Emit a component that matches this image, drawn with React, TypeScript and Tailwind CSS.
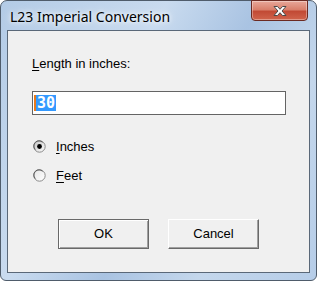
import React, { useState } from 'react'

function Radio({ checked }: { checked: boolean }) {
  return (
    <svg width="13" height="13" viewBox="0 0 13 13" className="shrink-0">
      <defs>
        <linearGradient id={checked ? 'rg1' : 'rg0'} x1="0" y1="0" x2="1" y2="1">
          <stop offset="0" stopColor={checked ? '#c4c4c4' : '#e6e6e6'} />
          <stop offset="1" stopColor="#ffffff" />
        </linearGradient>
      </defs>
      <circle cx="6.5" cy="6.5" r="5.7" fill={`url(#${checked ? 'rg1' : 'rg0'})`} stroke="#8a8a8a" strokeWidth="1" />
      <path d="M2.3 9.5 A5 5 0 0 1 9.5 2.3" fill="none" stroke="#5c5c5c" strokeWidth="1" />
      {checked && <circle cx="6.5" cy="6.5" r="2.4" fill="#000" />}
    </svg>
  )
}

function DialogButton({ label, isDefault }: { label: string; isDefault?: boolean }) {
  return (
    <button
      className={`w-[91px] h-[30px] bg-[#f0f0f0] text-[13px] text-black flex items-center justify-center ${
        isDefault
          ? 'border border-[#696969] shadow-[inset_1px_1px_0_#ffffff,inset_-1px_-1px_0_#a0a0a0]'
          : 'border border-t-white border-l-white border-r-[#696969] border-b-[#696969] shadow-[inset_-1px_-1px_0_#a0a0a0]'
      }`}
      style={{ fontFamily: '"Liberation Sans", Arial, sans-serif' }}
    >
      {label}
    </button>
  )
}

export default function App() {
  const [unit, setUnit] = useState<'inches' | 'feet'>('inches')

  return (
    <div className="w-[317px] h-[281px] overflow-hidden bg-white">
      <div className="w-[317px] h-[281px] rounded-t-[7px] rounded-b-[6px] border border-[#4f5c6b] bg-[linear-gradient(120deg,#b3cbe6_0%,#c9dbef_35%,#a9c3e2_55%,#c4d7ec_75%,#b6cde8_100%)] flex flex-col">
        {/* Title bar */}
        <div className="h-[29px] flex items-start justify-between">
          <span
            className="pl-[9px] pt-[7px] text-[14px] leading-[17px] text-black [text-shadow:0_0_8px_#ffffff,0_0_4px_#ffffff]"
            style={{ fontFamily: '"Noto Sans", "Open Sans", sans-serif' }}
          >
            L23 Imperial Conversion
          </span>
          <div className="mr-[8px] -mt-px w-[57px] h-[21px] rounded-b-[4px] border border-[#6b2a22] bg-[linear-gradient(180deg,#e8a89a_0%,#d9806c_45%,#c24a35_55%,#d0644c_100%)] shadow-[inset_0_0_0_1px_rgba(255,255,255,0.35)] flex items-center justify-center">
            <svg width="16" height="12" viewBox="0 0 16 12">
              <path
                d="M2 1.5 L5.5 1.5 L8 4.3 L10.5 1.5 L14 1.5 L10 6 L14 10.5 L10.5 10.5 L8 7.7 L5.5 10.5 L2 10.5 L6 6 Z"
                fill="#ffffff"
                stroke="#4a4a4a"
                strokeWidth="1"
                strokeLinejoin="round"
              />
            </svg>
          </div>
        </div>

        {/* Client area */}
        <div className="mx-[6px] h-[243px] border border-[#5a6878] bg-[#f0f0f0] flex flex-col pl-[24px] pt-[25px]">
          <div
            className="text-[13px] leading-[15px] text-black"
            style={{ fontFamily: '"Liberation Sans", Arial, sans-serif' }}
          >
            <span className="underline underline-offset-[2px]">L</span>ength in inches:
          </div>

          <div className="mt-[20px] w-[254px] h-[24px] border border-[#646464] bg-white flex items-center pl-[1px]">
            <span
              className="bg-[#3399ff] text-white text-[15px] font-bold leading-[16px] px-[1px] border-l-2 border-[#e87a1c]"
              style={{ fontFamily: '"DejaVu Sans Mono", monospace' }}
            >
              30
            </span>
          </div>

          <div
            className="mt-[25px] flex flex-col gap-[16px] text-[13px] leading-[13px] text-black"
            style={{ fontFamily: '"Liberation Sans", Arial, sans-serif' }}
          >
            <label className="flex items-center gap-[10px] pl-[1px]" onClick={() => setUnit('inches')}>
              <Radio checked={unit === 'inches'} />
              <span>
                <span className="underline underline-offset-[2px]">I</span>nches
              </span>
            </label>
            <label className="flex items-center gap-[10px] pl-[1px]" onClick={() => setUnit('feet')}>
              <Radio checked={unit === 'feet'} />
              <span>
                <span className="underline underline-offset-[2px]">F</span>eet
              </span>
            </label>
          </div>

          <div className="mt-[37px] ml-[26px] flex gap-[19px]">
            <DialogButton label="OK" isDefault />
            <DialogButton label="Cancel" />
          </div>
        </div>
      </div>
    </div>
  )
}
